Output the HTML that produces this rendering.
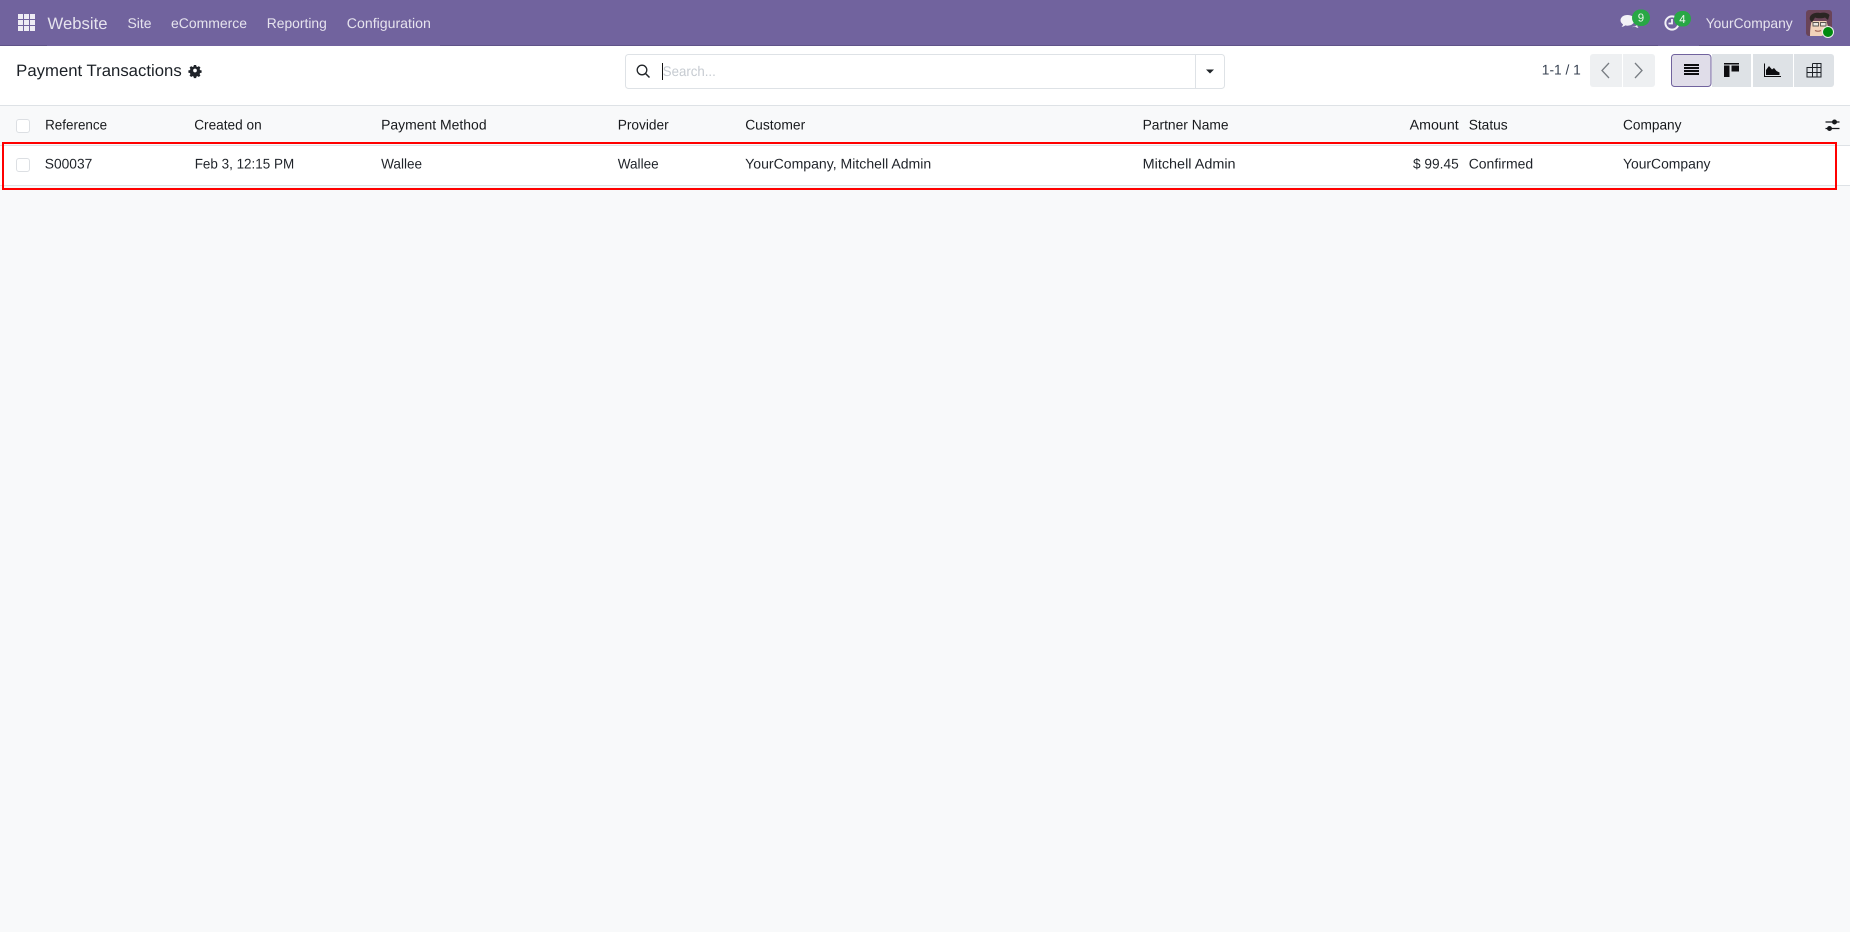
<!DOCTYPE html>
<html lang="en">
<head>
<meta charset="utf-8">
<title>Payment Transactions</title>
<style>
html,body{margin:0;padding:0;width:1850px;height:932px;overflow:hidden;background:#f8f9fa}
svg{display:block}
text{font-family:"Liberation Sans",sans-serif;font-size:14px;fill:#1f2329;text-rendering:geometricPrecision}
.n{fill:#e6e3ee}
.h{fill:#17191c}
</style>
</head>
<body>
<svg width="1850" height="932" viewBox="0 0 1850 932" xmlns="http://www.w3.org/2000/svg">
<rect width="1850" height="932" fill="#f8f9fa"/>
<!-- navbar -->
<rect width="1850" height="46" fill="#71639e"/>
<path d="M0 45.5H47M440 45.5H1658M1699 45.5H1800" stroke="#5f5388" stroke-width="1"/>
<g fill="#eeecf4">
<rect x="18" y="14" width="5" height="5"/><rect x="24" y="14" width="5" height="5"/><rect x="30" y="14" width="5" height="5"/>
<rect x="18" y="20" width="5" height="5"/><rect x="24" y="20" width="5" height="5"/><rect x="30" y="20" width="5" height="5"/>
<rect x="18" y="26" width="5" height="5"/><rect x="24" y="26" width="5" height="5"/><rect x="30" y="26" width="5" height="5"/>
</g>
<text class="n" x="47.500" y="28.800" style="font-size:16.500px" textLength="60" lengthAdjust="spacingAndGlyphs">Website</text>
<text class="n" x="127.500" y="27.800" textLength="24" lengthAdjust="spacingAndGlyphs">Site</text>
<text class="n" x="171" y="27.800" textLength="76" lengthAdjust="spacingAndGlyphs">eCommerce</text>
<text class="n" x="266.800" y="27.800" textLength="60" lengthAdjust="spacingAndGlyphs">Reporting</text>
<text class="n" x="346.800" y="27.800" textLength="84" lengthAdjust="spacingAndGlyphs">Configuration</text>
<!-- systray -->
<path d="M1627.500 15c-4.200 0-7 2.400-7 5.300 0 1.700 1 3.100 2.500 4.100-.2 1-.8 1.800-1.500 2.500 1.500-.1 2.800-.7 3.900-1.500.7.200 1.400.3 2.100.3 4.200 0 7-2.500 7-5.400S1631.700 15 1627.500 15z" fill="#f3f2f7"/>
<path d="M1631.500 27c1.300.2 2.600 0 3.500-.5 1 .8 2.200 1.300 3.500 1.500-.6-.7-1-1.400-1.200-2.200 1-.7 1.700-1.700 1.900-2.800-1.500 2.200-4.300 3.700-7.700 4z" fill="#f3f2f7"/>
<rect x="1632" y="9.500" width="18" height="16.500" rx="8.250" fill="#28a745"/>
<text x="1641" y="21.500" text-anchor="middle" style="font-size:11.500px;fill:#eef7ef">9</text>
<circle cx="1672" cy="23" r="6.600" fill="none" stroke="#f3f2f7" stroke-width="2"/>
<path d="M1672 19v4.500h-3.500" fill="none" stroke="#f3f2f7" stroke-width="1.800"/>
<rect x="1674" y="11" width="17" height="15.500" rx="7.700" fill="#28a745"/>
<text x="1682.500" y="23" text-anchor="middle" style="font-size:11.500px;fill:#eef7ef">4</text>
<text class="n" x="1705.700" y="27.800" textLength="87" lengthAdjust="spacingAndGlyphs">YourCompany</text>
<!-- avatar -->
<rect x="1806" y="10" width="26" height="26" rx="3" fill="#6a4458"/>
<path d="M1810 36c0-6 .500-9 1.500-15h15l2 8c-1 4-4 6-7 7z" fill="#f2d2ba"/>
<path d="M1810 20c-1.500-5 4-8 10-7 4-1 8 0 9.500 2l-1.500 5-3-2.500c-3 1-7 1-10 0l-3 5z" fill="#2b2523"/>
<path d="M1813 22.500h5.500v3.500h-5.500zM1820.500 22.500h5.500v3.500h-5.500z" fill="#eae6e0" stroke="#5a5450" stroke-width=".9"/>
<path d="M1815 30.500c2 1 4 1 6 0" fill="none" stroke="#9a5c50" stroke-width="1.100"/>
<circle cx="1828" cy="32" r="6" fill="#f0f0f0"/>
<circle cx="1828" cy="32" r="5" fill="#008a0e"/>
<!-- control panel -->
<rect y="46" width="1850" height="59" fill="#fff"/>
<rect y="105" width="1850" height="1" fill="#dee2e6"/>
<text x="16.200" y="76" style="font-size:16.500px;fill:#1b2026" textLength="165.500" lengthAdjust="spacingAndGlyphs">Payment Transactions</text>
<!-- gear -->
<g transform="translate(195 70.500) scale(.88)" fill="#1f2329">
<path d="M-1.300-6.300h2.600l.3 1.700 1.300.6 1.500-1 1.800 1.800-1 1.500.6 1.300 1.700.3v2.600l-1.700.3-.6 1.300 1 1.500-1.800 1.800-1.500-1-1.300.6-.3 1.700h-2.600l-.3-1.700-1.300-.6-1.500 1-1.800-1.800 1-1.500-.6-1.300-1.700-.3v-2.600l1.700-.3.6-1.300-1-1.500 1.800-1.800 1.500 1 1.300-.6z"/>
<circle r="2.100" fill="#fff"/>
</g>
<!-- search -->
<rect x="625.500" y="54.500" width="599" height="34" rx="3" fill="#fff" stroke="#dee2e6"/>
<path d="M1195.500 55v33" stroke="#dee2e6"/>
<circle cx="642" cy="70" r="4.800" fill="none" stroke="#212529" stroke-width="1.300"/>
<path d="M645.500 73.500l4 4" stroke="#212529" stroke-width="1.500"/>
<rect x="662" y="63" width="1" height="17" fill="#111"/>
<text x="662.800" y="75.800" style="fill:#c6cbd1" textLength="53" lengthAdjust="spacingAndGlyphs">Search...</text>
<path d="M1206 69.500h8l-4 4z" fill="#212529"/>
<!-- pager -->
<text x="1541.800" y="74.500" style="fill:#374151" textLength="39" lengthAdjust="spacingAndGlyphs">1-1 / 1</text>
<rect x="1590" y="54" width="65" height="33" rx="3" fill="#eef0f2"/>
<rect x="1622" y="54" width="1" height="33" fill="#fff"/>
<path d="M1609 63l-7 7.500 7 7.500" fill="none" stroke="#787d83" stroke-width="1.300"/>
<path d="M1635 63l7 7.500-7 7.500" fill="none" stroke="#787d83" stroke-width="1.300"/>
<!-- view switch -->
<path d="M1712 54h39v33h-39zM1753 54h40v33h-40z" fill="#dee2e6"/>
<path d="M1794 54h37a3 3 0 0 1 3 3v27a3 3 0 0 1-3 3h-37z" fill="#dee2e6"/>
<rect x="1671.500" y="54.500" width="39.500" height="32" rx="3" fill="#e0dde9" stroke="#71639e"/>
<g fill="#0d0d10">
<rect x="1684" y="64" width="15" height="2"/><rect x="1684" y="67" width="15" height="2"/><rect x="1684" y="70" width="15" height="2"/><rect x="1684" y="73" width="15" height="2"/>
<path d="M1724 63h15v1.500h-15zM1724 65.500h5.500V77H1724zM1731.500 65.500h7.500v6h-7.500z"/>
<path d="M1764 63.500h1V76h16v1h-17z"/>
<path d="M1766 75v-5l3-4 3 3.500 2-1.500 2.500 3 3 1.500V75z"/>
</g>
<g fill="none" stroke="#1c2025" stroke-width="1">
<path d="M1812.500 63.500h8.500v13.500h-14v-9.500h14M1807 72.500h14M1812.500 63.500V77M1817 63.500V77"/>
</g>
<!-- list header -->
<rect y="106" width="1850" height="39" fill="#f8f9fa"/>
<rect y="145" width="1850" height="1" fill="#dee2e6"/>
<rect x="16.500" y="119.500" width="13" height="13" rx="2.500" fill="#fff" stroke="#dcdfe3"/>
<text class="h" x="45.100" y="129.500" textLength="62" lengthAdjust="spacingAndGlyphs">Reference</text>
<text class="h" x="194.200" y="129.500" textLength="67.500" lengthAdjust="spacingAndGlyphs">Created on</text>
<text class="h" x="381.100" y="129.500" textLength="105.500" lengthAdjust="spacingAndGlyphs">Payment Method</text>
<text class="h" x="617.700" y="129.500" textLength="51" lengthAdjust="spacingAndGlyphs">Provider</text>
<text class="h" x="745.200" y="129.500" textLength="60" lengthAdjust="spacingAndGlyphs">Customer</text>
<text class="h" x="1142.600" y="129.500" textLength="86" lengthAdjust="spacingAndGlyphs">Partner Name</text>
<text class="h" x="1409.700" y="129.500" textLength="49" lengthAdjust="spacingAndGlyphs">Amount</text>
<text class="h" x="1468.700" y="129.500" textLength="39" lengthAdjust="spacingAndGlyphs">Status</text>
<text class="h" x="1623" y="129.500" textLength="58.500" lengthAdjust="spacingAndGlyphs">Company</text>
<path d="M1825.500 122h14M1825.500 128.500h14" stroke="#16191c" stroke-width="1.300"/>
<circle cx="1834.500" cy="122" r="2.500" fill="#16191c"/>
<circle cx="1829.500" cy="128.500" r="2.500" fill="#16191c"/>
<!-- row -->
<rect y="146" width="1850" height="39" fill="#fff"/>
<rect y="185" width="1850" height="1" fill="#dee2e6"/>
<rect x="16.500" y="158.500" width="13" height="13" rx="2.500" fill="#fff" stroke="#dcdfe3"/>
<text x="44.800" y="168.500" textLength="47.500" lengthAdjust="spacingAndGlyphs">S00037</text>
<text x="194.700" y="168.500" textLength="99.500" lengthAdjust="spacingAndGlyphs">Feb 3, 12:15 PM</text>
<text x="381.100" y="168.500" textLength="41" lengthAdjust="spacingAndGlyphs">Wallee</text>
<text x="617.700" y="168.500" textLength="41" lengthAdjust="spacingAndGlyphs">Wallee</text>
<text x="745.200" y="168.500" textLength="186" lengthAdjust="spacingAndGlyphs">YourCompany, Mitchell Admin</text>
<text x="1142.600" y="168.500" textLength="93" lengthAdjust="spacingAndGlyphs">Mitchell Admin</text>
<text x="1413" y="168.500" textLength="45.700" lengthAdjust="spacingAndGlyphs">$ 99.45</text>
<text x="1468.700" y="168.500" textLength="64.500" lengthAdjust="spacingAndGlyphs">Confirmed</text>
<text x="1623" y="168.500" textLength="87.500" lengthAdjust="spacingAndGlyphs">YourCompany</text>
<!-- red highlight -->
<rect x="3" y="143" width="1833" height="46" fill="none" stroke="#f00" stroke-width="2"/>
</svg>
</body>
</html>
